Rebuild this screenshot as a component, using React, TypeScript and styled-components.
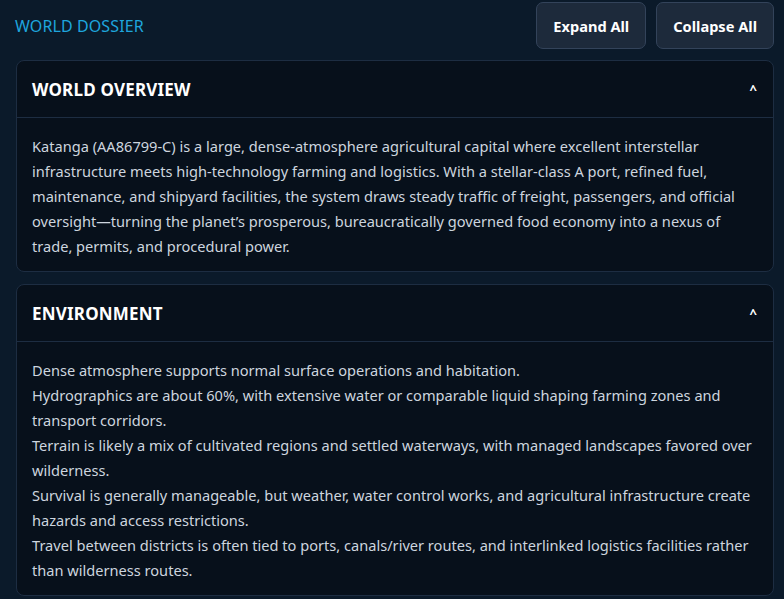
import React, { useState } from 'react';
import styled, { createGlobalStyle } from 'styled-components';

const GlobalStyle = createGlobalStyle`
  html, body {
    margin: 0;
    padding: 0;
    background: #0b1a2a;
  }
  body {
    font-family: "Noto Sans", "Open Sans", sans-serif;
    color: #cdd5df;
  }
`;

type Section = {
  id: string;
  title: string;
  lines: string[];
};

const sections: Section[] = [
  {
    id: 'overview',
    title: 'WORLD OVERVIEW',
    lines: [
      'Katanga (AA86799-C) is a large, dense-atmosphere agricultural capital where excellent interstellar infrastructure meets high-technology farming and logistics. With a stellar-class A port, refined fuel, maintenance, and shipyard facilities, the system draws steady traffic of freight, passengers, and official oversight\u2014turning the planet\u2019s prosperous, bureaucratically governed food economy into a nexus of trade, permits, and procedural power.',
    ],
  },
  {
    id: 'environment',
    title: 'ENVIRONMENT',
    lines: [
      'Dense atmosphere supports normal surface operations and habitation.',
      'Hydrographics are about 60%, with extensive water or comparable liquid shaping farming zones and transport corridors.',
      'Terrain is likely a mix of cultivated regions and settled waterways, with managed landscapes favored over wilderness.',
      'Survival is generally manageable, but weather, water control works, and agricultural infrastructure create hazards and access restrictions.',
      'Travel between districts is often tied to ports, canals/river routes, and interlinked logistics facilities rather than wilderness routes.',
    ],
  },
];

const App = () => {
  const [open, setOpen] = useState<Record<string, boolean>>({ overview: true, environment: true });

  const setAll = (value: boolean) => {
    const next: Record<string, boolean> = {};
    sections.forEach(s => (next[s.id] = value));
    setOpen(next);
  };

  return (
    <>
      <GlobalStyle />
      <Page>
        <TopBar>
          <Heading>WORLD DOSSIER</Heading>
          <Actions>
            <ActionButton onClick={() => setAll(true)}>Expand All</ActionButton>
            <ActionButton onClick={() => setAll(false)}>Collapse All</ActionButton>
          </Actions>
        </TopBar>
        <List>
          {sections.map(s => (
            <Card key={s.id}>
              <CardHeader onClick={() => setOpen({ ...open, [s.id]: !open[s.id] })}>
                <CardTitle>{s.title}</CardTitle>
                <Chevron>{open[s.id] ? '^' : 'v'}</Chevron>
              </CardHeader>
              {open[s.id] && (
                <CardBody>
                  {s.lines.map((l, i) => (
                    <Line key={i}>{l}</Line>
                  ))}
                </CardBody>
              )}
            </Card>
          ))}
        </List>
      </Page>
    </>
  );
};

export default App;

const Page = styled.div`
  padding: 2px 10px 0 16px;
`;

const TopBar = styled.div`
  display: flex;
  align-items: center;
  justify-content: space-between;
  height: 47px;
`;

const Heading = styled.div`
  margin-left: -1px;
  color: #1ea5dd;
  font-size: 16px;
  letter-spacing: 0.1px;
`;

const Actions = styled.div`
  display: flex;
  gap: 10px;
`;

const ActionButton = styled.button`
  height: 47px;
  padding: 0 16px;
  background: #1d2a3b;
  border: 1px solid #33435a;
  border-radius: 7px;
  color: #ffffff;
  font-family: "Noto Sans", sans-serif;
  font-size: 14.6px;
  font-weight: 700;
  cursor: pointer;
`;

const List = styled.div`
  display: flex;
  flex-direction: column;
  gap: 12px;
  margin-top: 11px;
`;

const Card = styled.div`
  background: #07101b;
  border: 1px solid #1d2d42;
  border-radius: 8px;
  overflow: hidden;
`;

const CardHeader = styled.div`
  display: flex;
  align-items: center;
  justify-content: space-between;
  height: 56px;
  padding: 0 16px 0 15px;
  border-bottom: 1px solid #1d2d42;
  cursor: pointer;
`;

const CardTitle = styled.div`
  color: #ffffff;
  font-size: 17px;
  font-weight: 700;
  letter-spacing: 0.2px;
`;

const Chevron = styled.span`
  color: #ffffff;
  font-size: 13px;
  font-weight: 700;
`;

const CardBody = styled.div`
  padding: 16px 12px 12px 15px;
  font-size: 14.6px;
  line-height: 25px;
  color: #cdd5df;
`;

const Line = styled.div``;
